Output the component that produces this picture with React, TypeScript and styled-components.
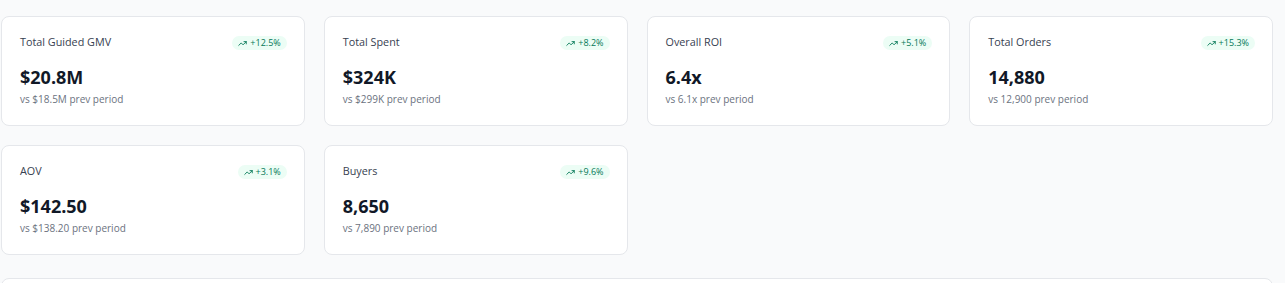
import React from "react";
import styled, { createGlobalStyle } from "styled-components";

const GlobalStyle = createGlobalStyle`
  html, body {
    margin: 0;
    padding: 0;
    background: #f9fafb;
    font-family: "Open Sans", "Noto Sans", Arial, sans-serif;
  }
`;

interface Metric {
  label: string;
  value: string;
  prev: string;
  change: string;
}

const metrics: Metric[] = [
  { label: "Total Guided GMV", value: "$20.8M", prev: "vs $18.5M prev period", change: "+12.5%" },
  { label: "Total Spent", value: "$324K", prev: "vs $299K prev period", change: "+8.2%" },
  { label: "Overall ROI", value: "6.4x", prev: "vs 6.1x prev period", change: "+5.1%" },
  { label: "Total Orders", value: "14,880", prev: "vs 12,900 prev period", change: "+15.3%" },
  { label: "AOV", value: "$142.50", prev: "vs $138.20 prev period", change: "+3.1%" },
  { label: "Buyers", value: "8,650", prev: "vs 7,890 prev period", change: "+9.6%" },
];

const TrendIcon = () => (
  <svg width="9" height="9" viewBox="0 0 24 24" fill="none" stroke="currentColor" strokeWidth="2.4" strokeLinecap="round" strokeLinejoin="round">
    <polyline points="22 7 13.5 15.5 8.5 10.5 2 17" />
    <polyline points="16 7 22 7 22 13" />
  </svg>
);

const App = (): React.ReactElement => {
  return (
    <Page>
      <GlobalStyle />
      <Grid>
        {metrics.map((m) => (
          <Card key={m.label}>
            <CardHead>
              <Label>{m.label}</Label>
              <Badge>
                <TrendIcon />
                {m.change}
              </Badge>
            </CardHead>
            <Value>{m.value}</Value>
            <Prev>{m.prev}</Prev>
          </Card>
        ))}
      </Grid>
      <Panel />
    </Page>
  );
};

export default App;

const Page = styled.div`
  width: 1273px;
  padding: 16px 0 0 1px;
  box-sizing: border-box;
  height: 283px;
  overflow: hidden;
`;

const Grid = styled.div`
  display: grid;
  grid-template-columns: repeat(4, 1fr);
  column-gap: 19px;
  row-gap: 19px;
`;

const Card = styled.div`
  background: #ffffff;
  border: 1px solid #e5e7eb;
  border-radius: 8px;
  padding: 17px 17px 17px 18px;
  height: 110px;
  box-sizing: border-box;
`;

const CardHead = styled.div`
  display: flex;
  justify-content: space-between;
  align-items: flex-start;
`;

const Label = styled.div`
  font-size: 10.8px;
  line-height: 16px;
  color: #374151;
`;

const Badge = styled.span`
  display: inline-flex;
  align-items: center;
  gap: 3px;
  margin-top: 2px;
  height: 14px;
  padding: 0 6px;
  border-radius: 999px;
  background: #ecfdf5;
  color: #047857;
  font-size: 9px;
  line-height: 14px;
`;

const Value = styled.div`
  margin-top: 13px;
  font-size: 18px;
  line-height: 28px;
  font-weight: 700;
  color: #111827;
`;

const Prev = styled.div`
  font-size: 10px;
  line-height: 16px;
  color: #6b7280;
`;

const Panel = styled.div`
  margin-top: 23px;
  height: 60px;
  background: #ffffff;
  border: 1px solid #e5e7eb;
  border-radius: 8px;
`;
